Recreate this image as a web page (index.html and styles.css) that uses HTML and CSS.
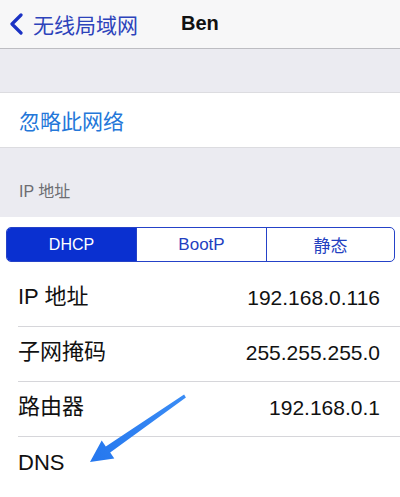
FILE: index.html
```html
<!DOCTYPE html>
<html lang="zh">
<head>
<meta charset="utf-8">
<title>Ben</title>
<link rel="stylesheet" href="styles.css">
</head>
<body>
<div class="screen">
  <header class="nav">
    <div class="back">
      <svg class="chev" width="16" height="22" viewBox="0 0 16 22"><path d="M13 2 L4 11 L13 20" fill="none" stroke="#1b32c4" stroke-width="3.2" stroke-linecap="round" stroke-linejoin="round"/></svg>
      <span class="back-text">无线局域网</span>
    </div>
    <div class="title">Ben</div>
  </header>
  <div class="spacer"></div>
  <div class="group">
    <div class="cell link">忽略此网络</div>
  </div>
  <div class="section-head">IP 地址</div>
  <div class="group ip">
    <div class="seg">
      <div class="seg-item active">DHCP</div>
      <div class="seg-item">BootP</div>
      <div class="seg-item">静态</div>
    </div>
    <div class="rows">
      <div class="row"><span class="label">IP 地址</span><span class="value">192.168.0.116</span></div>
      <div class="row"><span class="label">子网掩码</span><span class="value">255.255.255.0</span></div>
      <div class="row"><span class="label">路由器</span><span class="value">192.168.0.1</span></div>
      <div class="row last"><span class="label">DNS</span><span class="value"></span></div>
    </div>
  </div>
  <svg class="arrow" width="400" height="497" viewBox="0 0 400 497">
    <defs>
      <linearGradient id="ag" x1="185" y1="396" x2="90" y2="462" gradientUnits="userSpaceOnUse">
        <stop offset="0" stop-color="#3a8cf5"/>
        <stop offset="1" stop-color="#2577ee"/>
      </linearGradient>
    </defs>
    <path d="M185.9 397.4 L184.1 394.6 L105.8 446.6 L101.7 440.5 L90 462 L114.3 458.5 L110.2 452.4 Z" fill="url(#ag)"/>
  </svg>
</div>
</body>
</html>
```
FILE: styles.css
```css
html, body {
  margin: 0;
  padding: 0;
  background: #ffffff;
}
.screen {
  position: relative;
  width: 400px;
  height: 497px;
  overflow: hidden;
  font-family: "Liberation Sans", "Noto Sans CJK SC", sans-serif;
  background: #ebebf1;
}
.nav {
  height: 48px;
  background: #f7f7f8;
  border-bottom: 1px solid #bdbdc2;
  display: flex;
  align-items: center;
  position: relative;
}
.back {
  display: flex;
  align-items: center;
  padding-left: 8px;
  gap: 9px;
}
.chev {
  display: block;
}
.back-text {
  font-family: "Noto Sans CJK SC", sans-serif;
  font-size: 21px;
  color: #2d43bb;
  line-height: 1;
}
.title {
  margin-left: 43px;
  font-size: 20px;
  font-weight: bold;
  color: #111111;
  line-height: 1;
  padding-bottom: 2px;
}
.spacer {
  height: 43px;
}
.group {
  background: #ffffff;
  border-top: 1px solid #dcdce0;
  border-bottom: 1px solid #dcdce0;
}
.cell {
  height: 54px;
  display: flex;
  align-items: center;
  padding-left: 19px;
}
.link {
  font-family: "Noto Sans CJK SC", sans-serif;
  font-size: 21px;
  color: #2477d9;
}
.section-head {
  height: 69px;
  box-sizing: border-box;
  padding: 34px 0 0 19px;
  font-size: 16px;
  color: #6d6d72;
  line-height: 20px;
}
.group.ip {
  border-top: none;
  border-bottom: none;
  padding-top: 10px;
  height: 300px;
}
.seg {
  margin: 0 5px 0 6px;
  height: 35px;
  box-sizing: border-box;
  border: 1px solid #2542c8;
  border-radius: 5px;
  display: flex;
  overflow: hidden;
}
.seg-item {
  flex: 0 0 129px;
  display: flex;
  align-items: center;
  justify-content: center;
  font-size: 17px;
  color: #2340bf;
  border-left: 1px solid #2542c8;
}
.seg-item:first-child {
  border-left: none;
}
.seg-item:last-child {
  flex: 1 1 auto;
}
.seg-item.active {
  background: #0a30d0;
  color: #ffffff;
  font-size: 16px;
}
.rows {
  margin-top: 10px;
}
.row {
  margin-left: 18px;
  height: 55px;
  box-sizing: border-box;
  border-bottom: 1px solid #d6d6da;
  display: flex;
  align-items: center;
  justify-content: space-between;
  padding-right: 20px;
}
.row.last {
  border-bottom: none;
}
.label {
  font-size: 22px;
  color: #111111;
  line-height: 1;
  padding-bottom: 4px;
}
.value {
  font-size: 21px;
  color: #111111;
  line-height: 1;
  padding-bottom: 4px;
}
.arrow {
  position: absolute;
  left: 0;
  top: 0;
  pointer-events: none;
}
```
